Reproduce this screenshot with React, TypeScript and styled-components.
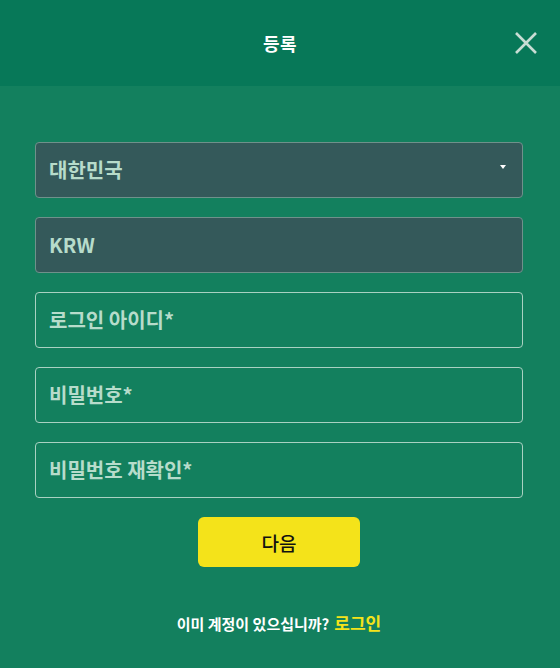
import React from "react";
import styled, { createGlobalStyle } from "styled-components";

const Global = createGlobalStyle`
  html, body { margin: 0; padding: 0; }
  body {
    width: 560px;
    height: 668px;
    overflow: hidden;
    background: #13805e;
    font-family: "Noto Sans CJK KR", "Noto Sans", sans-serif;
  }
  * { box-sizing: border-box; }
`;

const Modal = styled.div`
  width: 560px;
  height: 668px;
  display: flex;
  flex-direction: column;
  background-color: #13805e;
`;

const Header = styled.header`
  height: 86px;
  flex: none;
  background: #077858;
  display: flex;
  align-items: center;
  justify-content: center;
  position: relative;
`;

const Title = styled.h1`
  margin: 0;
  color: #ffffff;
  font-size: 18px;
  font-weight: 700;
  letter-spacing: 0.5px;
`;

const Close = styled.button`
  position: absolute;
  right: 20px;
  top: 29px;
  width: 28px;
  height: 28px;
  padding: 0;
  border: 0;
  background: none;
  display: flex;
  align-items: center;
  justify-content: center;
`;

const Body = styled.main`
  flex: 1;
  padding: 56px 37px 0 35px;
  display: flex;
  flex-direction: column;
  align-items: center;
`;

const Fields = styled.div`
  width: 100%;
  display: flex;
  flex-direction: column;
  gap: 19px;
`;

const Field = styled.div<{ $filled?: boolean }>`
  position: relative;
  height: 56px;
  border-radius: 4px;
  border: 1px solid ${(p) => (p.$filled ? "#6f918b" : "#a9d1c2")};
  background: ${(p) => (p.$filled ? "#34595a" : "transparent")};
  display: flex;
  align-items: center;
  padding: 0 13px 1px;
  color: #b7dccb;
  font-size: 20px;
  font-weight: 700;
`;

const Caret = styled.span`
  position: absolute;
  right: 16px;
  top: 22px;
  width: 0;
  height: 0;
  border-left: 3px solid transparent;
  border-right: 3px solid transparent;
  border-top: 4px solid #ffffff;
`;

const NextButton = styled.button`
  margin-top: 19px;
  width: 162px;
  height: 50px;
  border: 0;
  border-radius: 6px;
  background: #f4e31a;
  color: #111;
  font-family: inherit;
  font-size: 19px;
  font-weight: 500;
  display: flex;
  align-items: center;
  justify-content: center;
`;

const Footer = styled.p`
  margin: 43px 0 0;
  color: #ffffff;
  font-size: 15px;
  font-weight: 700;
  display: flex;
  align-items: baseline;
  gap: 5px;
`;

const LoginLink = styled.a`
  color: #f4e31a;
  font-size: 17px;
  font-weight: 700;
  text-decoration: none;
`;

export default function App() {
  return (
    <>
      <Global />
      <Modal>
        <Header>
          <Title>등록</Title>
          <Close aria-label="close">
            <svg width="24" height="24" viewBox="0 0 24 24">
              <path d="M2 2 L22 22 M22 2 L2 22" stroke="#c7ddd4" strokeWidth="2.6" strokeLinecap="butt" />
            </svg>
          </Close>
        </Header>
        <Body>
          <Fields>
            <Field $filled>
              대한민국
              <Caret />
            </Field>
            <Field $filled>KRW</Field>
            <Field>로그인 아이디*</Field>
            <Field>비밀번호*</Field>
            <Field>비밀번호 재확인*</Field>
          </Fields>
          <NextButton>다음</NextButton>
          <Footer>
            이미 계정이 있으십니까?
            <LoginLink href="#">로그인</LoginLink>
          </Footer>
        </Body>
      </Modal>
    </>
  );
}
